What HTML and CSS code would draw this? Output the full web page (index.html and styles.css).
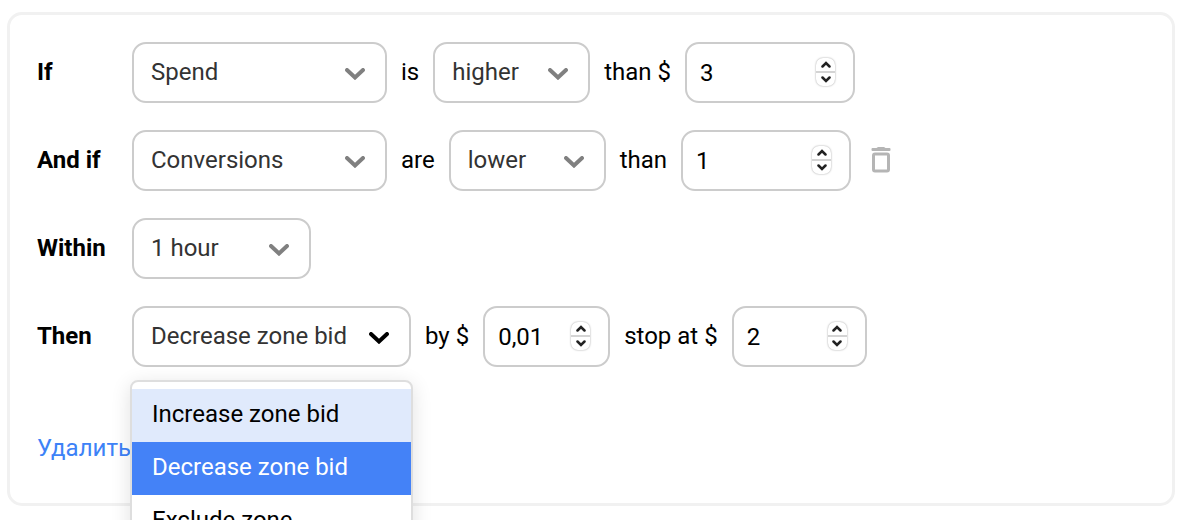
FILE: index.html
```html
<!DOCTYPE html>
<html lang="en">
<head>
  <meta charset="UTF-8" />
  <title>Auto rule</title>
  <link rel="stylesheet" href="styles.css">
</head>
<body>

<!-- Shared icons -->
<svg class="sprite" aria-hidden="true">
  <symbol id="chevron" viewBox="0 0 20 12">
    <path d="M2 2 L10 9.500 L18 2" fill="none" stroke="currentColor" stroke-width="4" stroke-linecap="round" stroke-linejoin="miter" />
  </symbol>
  <symbol id="step-up" viewBox="0 0 10 7">
    <path d="M1.500 5.500 L5 2 L8.500 5.500" fill="none" stroke="currentColor" stroke-width="2.500" stroke-linecap="round" />
  </symbol>
  <symbol id="step-down" viewBox="0 0 10 7">
    <path d="M1.500 1.500 L5 5 L8.500 1.500" fill="none" stroke="currentColor" stroke-width="2.500" stroke-linecap="round" />
  </symbol>
</svg>

<form class="card">

  <div class="row">
    <label class="title" for="metric-1">If</label>
    <div class="select w-metric">
      <select id="metric-1"><option>Spend</option><option>Conversions</option></select>
      <svg class="chevron"><use href="#chevron" /></svg>
    </div>
    <label for="compare-1">is</label>
    <div class="select w-compare">
      <select id="compare-1"><option>higher</option><option>lower</option></select>
      <svg class="chevron"><use href="#chevron" /></svg>
    </div>
    <label for="value-1">than $</label>
    <div class="number w-value">
      <input type="text" inputmode="decimal" id="value-1" value="3" />
      <div class="stepper">
        <button type="button" aria-label="Up"><svg><use href="#step-up" /></svg></button>
        <button type="button" aria-label="Down"><svg><use href="#step-down" /></svg></button>
      </div>
    </div>
  </div>

  <div class="row">
    <label class="title" for="metric-2">And if</label>
    <div class="select w-metric">
      <select id="metric-2"><option>Conversions</option><option>Spend</option></select>
      <svg class="chevron"><use href="#chevron" /></svg>
    </div>
    <label for="compare-2">are</label>
    <div class="select w-compare">
      <select id="compare-2"><option>lower</option><option>higher</option></select>
      <svg class="chevron"><use href="#chevron" /></svg>
    </div>
    <label for="value-2">than</label>
    <div class="number w-value">
      <input type="text" inputmode="decimal" id="value-2" value="1" />
      <div class="stepper">
        <button type="button" aria-label="Up"><svg><use href="#step-up" /></svg></button>
        <button type="button" aria-label="Down"><svg><use href="#step-down" /></svg></button>
      </div>
    </div>
    <button type="button" class="trash" aria-label="Remove condition">
      <svg viewBox="0 0 20 28">
        <path d="M1.500 2 H5.500 L7 1 H13 L14.500 2 H18.500 Q19.500 2 19.500 3 V4 Q19.500 5 18.500 5 H1.500 Q0.500 5 0.500 4 V3 Q0.500 2 1.500 2 Z" fill="#b5b5b5" />
        <rect x="2.500" y="8" width="15" height="17" rx="1.500" fill="none" stroke="#b5b5b5" stroke-width="3" />
      </svg>
    </button>
  </div>

  <div class="row">
    <label class="title" for="period">Within</label>
    <div class="select w-period">
      <select id="period"><option>1 hour</option></select>
      <svg class="chevron"><use href="#chevron" /></svg>
    </div>
  </div>

  <div class="row">
    <label class="title" for="action">Then</label>
    <div class="select w-action open">
      <select id="action"><option>Decrease zone bid</option><option>Increase zone bid</option><option>Exclude zone</option></select>
      <svg class="chevron"><use href="#chevron" /></svg>
      <ul class="menu" role="listbox" aria-label="Action">
        <li role="option" class="hover">Increase zone bid</li>
        <li role="option" class="selected" aria-selected="true">Decrease zone bid</li>
        <li role="option">Exclude zone</li>
      </ul>
    </div>
    <label for="step">by $</label>
    <div class="number w-step">
      <input type="text" inputmode="decimal" id="step" value="0,01" />
      <div class="stepper">
        <button type="button" aria-label="Up"><svg><use href="#step-up" /></svg></button>
        <button type="button" aria-label="Down"><svg><use href="#step-down" /></svg></button>
      </div>
    </div>
    <label for="limit">stop at $</label>
    <div class="number w-limit">
      <input type="text" inputmode="decimal" id="limit" value="2" />
      <div class="stepper">
        <button type="button" aria-label="Up"><svg><use href="#step-up" /></svg></button>
        <button type="button" aria-label="Down"><svg><use href="#step-down" /></svg></button>
      </div>
    </div>
  </div>

  <a class="delete" href="#" lang="ru">Удалить</a>

</form>

</body>
</html>
```
FILE: styles.css
```css
* {
  box-sizing: border-box;
}
body {
  font-family: Roboto, sans-serif;
  font-size: 24px;
  line-height: 28px;
  color: #000;
  background: #fff;
  min-height: 100vh;
  margin: 0;
  padding: 12px 25px 14px 7px;
}
.sprite {
  display: none;
}
.card {
  display: flex;
  flex-direction: column;
  align-items: flex-start;
  gap: 27px;
  padding: 27px 27px 41px;
  border: 3px solid #f1f1f1;
  border-radius: 15px;
}
.row {
  display: flex;
  align-items: center;
  gap: 14px;
}
label {
  padding-bottom: 2px;
}
.title {
  width: 81px;
  font-weight: bold;
}

/* Selects */
.select {
  position: relative;
  display: grid;
  align-items: center;
}
.select select {
  grid-area: 1 / 1;
  width: 100%;
  height: 61px;
  padding: 0 50px 2px 17px;
  appearance: none;
  font: inherit;
  color: #333;
  background: #fff;
  border: 2px solid #ccc;
  border-radius: 14px;
}
.chevron {
  grid-area: 1 / 1;
  justify-self: end;
  width: 20px;
  height: 12px;
  margin: 3px 22px 0 0;
  color: #808080;
  pointer-events: none;
}
.open .chevron {
  color: #000;
}
.w-metric { width: 255px; }
.w-compare { width: 157px; }
.w-period { width: 179px; }
.w-action { width: 279px; }

/* Dropdown list */
.menu {
  position: absolute;
  z-index: 1;
  top: 100%;
  left: -2px;
  right: -2px;
  margin: 13px 0 0;
  padding: 7px 0;
  list-style: none;
  background: #fff;
  border: 2px solid #dedede;
  border-radius: 8px;
  box-shadow: 0 4px 20px rgba(0, 0, 0, 0.12);
}
.menu li {
  padding: 11px 20px 14px;
}
.menu .hover {
  background: #e0eafc;
}
.menu .selected {
  color: #fff;
  background: #4482f7;
}

/* Number fields */
.number {
  display: flex;
  align-items: center;
  height: 61px;
  padding: 0 18px 0 13px;
  border: 2px solid #ccc;
  border-radius: 14px;
}
.number input {
  flex: 1;
  min-width: 0;
  padding: 0;
  font: inherit;
  color: #000;
  background: none;
  border: none;
  outline: none;
}
.w-value { width: 170px; }
.w-step { width: 127px; }
.w-limit { width: 135px; }
.stepper {
  display: flex;
  flex-direction: column;
  width: 19px;
  height: 28px;
  margin-bottom: 1px;
  border-radius: 7px;
  box-shadow: 0 0 2px rgba(0, 0, 0, 0.4);
}
.stepper button {
  flex: 1;
  display: flex;
  align-items: center;
  justify-content: center;
  padding: 0;
  color: #222;
  background: none;
  border: none;
}
.stepper button + button {
  border-top: 2px solid #d4d4d4;
}
.stepper svg {
  width: 10px;
  height: 7px;
}

.trash {
  width: 20px;
  height: 28px;
  margin: 0 0 2px 6px;
  padding: 0;
  background: none;
  border: none;
}
.trash svg {
  display: block;
}
.delete {
  margin-top: 40px;
  color: #3d82f7;
  text-decoration: none;
}
```
